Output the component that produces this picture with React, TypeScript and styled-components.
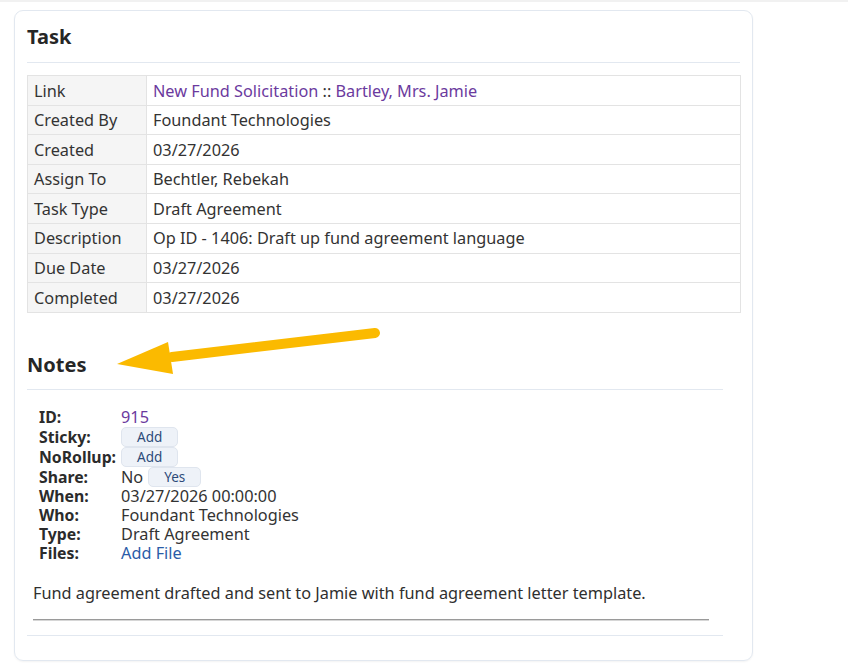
import React from "react";
import styled, { createGlobalStyle } from "styled-components";

const GlobalStyle = createGlobalStyle`
  html, body {
    margin: 0;
    padding: 0;
    background: #ffffff;
  }
  body {
    font-family: "Noto Sans", "DejaVu Sans", sans-serif;
    font-size: 16.3px;
    color: #333333;
  }
`;

const Page = styled.div`
  position: relative;
  width: 848px;
  height: 671px;
  box-sizing: border-box;
  border-top: 2px solid #f1f1f1;
  padding: 8px 0 0 14px;
`;

const Card = styled.section`
  box-sizing: border-box;
  width: 739px;
  height: 651px;
  border: 1px solid #e2e8f0;
  border-radius: 9px;
  box-shadow: 0 1px 2px rgba(0, 0, 0, 0.05);
  padding: 13px 12px 12px 12px;
  display: flex;
  flex-direction: column;
`;

const Heading = styled.h2<{ $gap: number }>`
  margin: ${(p) => p.$gap}px 0 0 0;
  font-size: 20px;
  line-height: 26px;
  font-weight: 700;
  color: #262626;
`;

const Rule = styled.hr<{ $top: number }>`
  margin: ${(p) => p.$top}px 0 0 0;
  border: 0;
  border-top: 1px solid #e2e8f0;
  height: 0;
`;

const InfoTable = styled.table`
  margin-top: 12px;
  width: 714px;
  border-collapse: collapse;
  font-size: 16.3px;
`;

const LabelCell = styled.th`
  width: 106px;
  background: #f5f5f5;
  border: 1px solid #e3e3e3;
  padding: 4.5px 6px 3.5px 6px;
  line-height: 20.6px;
  text-align: left;
  font-weight: 400;
  color: #333333;
`;

const ValueCell = styled.td`
  border: 1px solid #e3e3e3;
  padding: 4.5px 6px 3.5px 6px;
  line-height: 20.6px;
  color: #333333;
`;

const Link = styled.a<{ $tone?: "visited" | "plain" }>`
  color: ${(p) => (p.$tone === "plain" ? "#2a5ca8" : "#6b3a9e")};
  text-decoration: none;
`;

const NotesBlock = styled.div`
  margin-right: 17px;
  display: flex;
  flex-direction: column;
`;

const Fields = styled.div`
  margin: 18px 0 0 12px;
  display: grid;
  grid-template-columns: 82px auto;
  align-items: center;
`;

const FieldLabel = styled.div<{ $tall?: boolean }>`
  font-size: 15.8px;
  font-weight: 700;
  color: #2b2b2b;
  line-height: ${(p) => (p.$tall ? "20px" : "19px")};
  height: ${(p) => (p.$tall ? "20px" : "19px")};
  white-space: nowrap;
`;

const FieldValue = styled.div<{ $tall?: boolean }>`
  display: flex;
  align-items: center;
  gap: 5px;
  line-height: ${(p) => (p.$tall ? "20px" : "19px")};
  height: ${(p) => (p.$tall ? "20px" : "19px")};
`;

const SmallButton = styled.button`
  box-sizing: border-box;
  height: 20px;
  padding: 0 15px;
  border: 1px solid #dfe5ee;
  border-radius: 5px;
  background: #eef2f8;
  color: #2c4a78;
  font-family: "Noto Sans", "DejaVu Sans", sans-serif;
  font-size: 13.5px;
  line-height: 18px;
  cursor: pointer;
`;

const NoteText = styled.p`
  margin: 20px 0 0 6px;
  line-height: 20px;
  color: #2f2f2f;
`;

const NoteDivider = styled.hr`
  margin: 16px 14px 0 6px;
  border: 0;
  border-top: 1px solid #9a9a9a;
  border-bottom: 1px solid #d6d6d6;
  height: 0;
`;

const Pointer = styled.svg`
  position: absolute;
  left: 110px;
  top: 320px;
  pointer-events: none;
`;

const rows: Array<[string, React.ReactNode]> = [
  [
    "Link",
    <>
      <Link href="#">New Fund Solicitation</Link> :: <Link href="#">Bartley, Mrs. Jamie</Link>
    </>,
  ],
  ["Created By", "Foundant Technologies"],
  ["Created", "03/27/2026"],
  ["Assign To", "Bechtler, Rebekah"],
  ["Task Type", "Draft Agreement"],
  ["Description", "Op ID - 1406: Draft up fund agreement language"],
  ["Due Date", "03/27/2026"],
  ["Completed", "03/27/2026"],
];

export default function App() {
  return (
    <>
      <GlobalStyle />
      <Page>
        <Card>
          <Heading $gap={0}>Task</Heading>
          <Rule $top={12} />
          <InfoTable>
            <tbody>
              {rows.map(([label, value]) => (
                <tr key={label}>
                  <LabelCell>{label}</LabelCell>
                  <ValueCell>{value}</ValueCell>
                </tr>
              ))}
            </tbody>
          </InfoTable>

          <NotesBlock>
            <Heading $gap={39}>Notes</Heading>
            <Rule $top={11} />
            <Fields>
              <FieldLabel>ID:</FieldLabel>
              <FieldValue>
                <Link href="#">915</Link>
              </FieldValue>
              <FieldLabel $tall>Sticky:</FieldLabel>
              <FieldValue $tall>
                <SmallButton>Add</SmallButton>
              </FieldValue>
              <FieldLabel $tall>NoRollup:</FieldLabel>
              <FieldValue $tall>
                <SmallButton>Add</SmallButton>
              </FieldValue>
              <FieldLabel $tall>Share:</FieldLabel>
              <FieldValue $tall>
                No <SmallButton>Yes</SmallButton>
              </FieldValue>
              <FieldLabel>When:</FieldLabel>
              <FieldValue>03/27/2026 00:00:00</FieldValue>
              <FieldLabel>Who:</FieldLabel>
              <FieldValue>Foundant Technologies</FieldValue>
              <FieldLabel>Type:</FieldLabel>
              <FieldValue>Draft Agreement</FieldValue>
              <FieldLabel>Files:</FieldLabel>
              <FieldValue>
                <Link href="#" $tone="plain">
                  Add File
                </Link>
              </FieldValue>
            </Fields>
            <NoteText>
              Fund agreement drafted and sent to Jamie with fund agreement letter template.
            </NoteText>
            <NoteDivider />
            <Rule $top={14} />
          </NotesBlock>
        </Card>

        <Pointer width="275" height="60" viewBox="0 0 275 60">
          <line
            x1="265"
            y1="11"
            x2="62"
            y2="35"
            stroke="#fbba00"
            strokeWidth="10"
            strokeLinecap="round"
          />
          <polygon points="7,42 58,20 63,52" fill="#fbba00" />
        </Pointer>
      </Page>
    </>
  );
}
